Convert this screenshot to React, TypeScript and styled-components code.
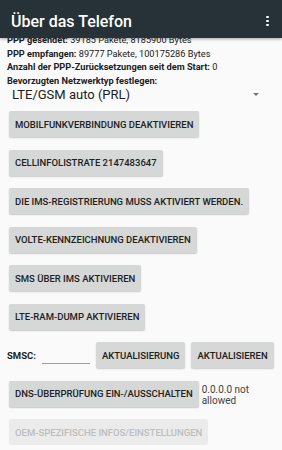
import React from "react";
import styled, { createGlobalStyle } from "styled-components";

const GlobalStyle = createGlobalStyle`
  html, body { margin: 0; padding: 0; background: #fafafa; }
  body { font-family: Roboto, "Noto Sans", "Liberation Sans", sans-serif; }
`;

const Screen = styled.div`
  width: 282px;
  height: 450px;
  overflow: hidden;
  display: flex;
  flex-direction: column;
  background: #fafafa;
`;

const AppBar = styled.header`
  position: relative;
  z-index: 2;
  flex: 0 0 38px;
  height: 38px;
  background: #263238;
  display: flex;
  align-items: center;
  justify-content: space-between;
  padding: 0 11px;
  box-shadow: 0 1px 3px rgba(0, 0, 0, 0.35);
`;

const Title = styled.h1`
  margin: 0;
  color: #ffffff;
  font-size: 16px;
  font-weight: 500;
  padding-top: 4px;
`;

const Kebab = styled.div`
  display: flex;
  flex-direction: column;
  gap: 1.6px;
  margin-right: 2px;
  margin-top: 4px;
  span {
    width: 2.6px;
    height: 2.6px;
    border-radius: 50%;
    background: #ffffff;
  }
`;

const Content = styled.main`
  flex: 1;
  overflow: hidden;
  display: flex;
  flex-direction: column;
  padding: 0 7px;
`;

const InfoLines = styled.div`
  margin-top: -5px;
  display: flex;
  flex-direction: column;
`;

const InfoLine = styled.div`
  font-size: 9.2px;
  line-height: 13.5px;
  color: #212121;
  white-space: nowrap;
  b { font-weight: 700; }
`;

const Spinner = styled.div`
  display: flex;
  align-items: center;
  justify-content: space-between;
  height: 14px;
  padding: 0 16px 0 5px;
  font-size: 13px;
  color: #212121;
`;

const Arrow = styled.div`
  width: 0;
  height: 0;
  border-left: 3.5px solid transparent;
  border-right: 3.5px solid transparent;
  border-top: 3.5px solid #757575;
`;

const Buttons = styled.div`
  display: flex;
  flex-direction: column;
  align-items: flex-start;
  gap: 12.5px;
  margin-top: 10px;
  padding-left: 2px;
`;

const Button = styled.button<{ $disabled?: boolean }>`
  height: 26px;
  padding: 0 6px;
  border: none;
  border-radius: 2px;
  background: ${(p) => (p.$disabled ? "#ebebeb" : "#d6d7d7")};
  color: ${(p) => (p.$disabled ? "#bdbdbd" : "#212121")};
  font-family: Roboto, "Noto Sans", sans-serif;
  font-size: 9.5px;
  font-weight: 500;
  white-space: nowrap;
  box-shadow: ${(p) => (p.$disabled ? "none" : "0 1px 1.5px rgba(0,0,0,0.2)")};
`;

const Row = styled.div`
  display: flex;
  align-items: center;
  gap: 6px;
`;

const SmscLabel = styled.span`
  font-size: 9.5px;
  font-weight: 700;
  color: #212121;
  margin-left: -2px;
`;

const SmscInput = styled.div`
  width: 48px;
  height: 10px;
  border-bottom: 1px solid #9e9e9e;
  margin-top: 6px;
`;

const DnsText = styled.div`
  font-size: 10px;
  line-height: 11px;
  color: #424242;
  align-self: flex-start;
  margin-top: 3px;
  margin-left: -3px;
`;

export default function App() {
  return (
    <>
      <GlobalStyle />
      <Screen>
        <AppBar>
          <Title>Über das Telefon</Title>
          <Kebab>
            <span />
            <span />
            <span />
          </Kebab>
        </AppBar>
        <Content>
          <InfoLines>
            <InfoLine>
              <b>PPP gesendet:</b> 39185 Pakete, 8185900 Bytes
            </InfoLine>
            <InfoLine>
              <b>PPP empfangen:</b> 89777 Pakete, 100175286 Bytes
            </InfoLine>
            <InfoLine>
              <b>Anzahl der PPP-Zurücksetzungen seit dem Start:</b> 0
            </InfoLine>
            <InfoLine>
              <b>Bevorzugten Netzwerktyp festlegen:</b>
            </InfoLine>
          </InfoLines>
          <Spinner>
            <span>LTE/GSM auto (PRL)</span>
            <Arrow />
          </Spinner>
          <Buttons>
            <Button>MOBILFUNKVERBINDUNG DEAKTIVIEREN</Button>
            <Button>CELLINFOLISTRATE 2147483647</Button>
            <Button>DIE IMS-REGISTRIERUNG MUSS AKTIVIERT WERDEN.</Button>
            <Button>VOLTE-KENNZEICHNUNG DEAKTIVIEREN</Button>
            <Button>SMS ÜBER IMS AKTIVIEREN</Button>
            <Button>LTE-RAM-DUMP AKTIVIEREN</Button>
            <Row>
              <SmscLabel>SMSC:</SmscLabel>
              <SmscInput />
              <Button>AKTUALISIERUNG</Button>
              <Button>AKTUALISIEREN</Button>
            </Row>
            <Row>
              <Button>DNS-ÜBERPRÜFUNG EIN-/AUSSCHALTEN</Button>
              <DnsText>
                0.0.0.0 not
                <br />
                allowed
              </DnsText>
            </Row>
            <Button $disabled>OEM-SPEZIFISCHE INFOS/EINSTELLUNGEN</Button>
          </Buttons>
        </Content>
      </Screen>
    </>
  );
}
